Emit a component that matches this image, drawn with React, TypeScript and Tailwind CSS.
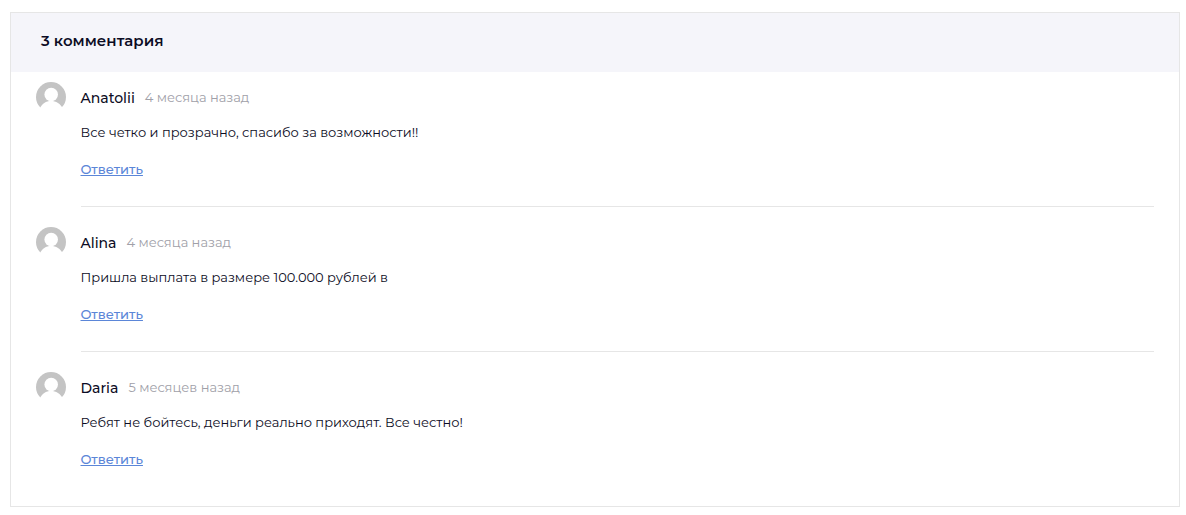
const comments = [
  { name: "Anatolii", time: "4 месяца назад", text: "Все четко и прозрачно, спасибо за возможности!!" },
  { name: "Alina", time: "4 месяца назад", text: "Пришла выплата в размере 100.000 рублей в" },
  { name: "Daria", time: "5 месяцев назад", text: "Ребят не бойтесь, деньги реально приходят. Все честно!" },
];

function Avatar() {
  return (
    <svg width="30" height="30" viewBox="0 0 30 30" className="block shrink-0">
      <circle cx="15" cy="15" r="15" fill="#c4c4c4" />
      <circle cx="15.2" cy="12.5" r="6.8" fill="#fff" />
      <path d="M3.5 27 C6 21.5 10 19 15 19 C20 19 24.5 21.5 27 27 L27 31 L3.5 31 Z" fill="#fff" />
    </svg>
  );
}

export default function App() {
  return (
    <div className="w-[1186px] h-[515px] bg-white pt-3 pl-2.5 font-['Montserrat','Inter',sans-serif]">
      <div className="w-[1170px] border border-[#e6e6e6] h-[495px]">
        <div className="h-[59px] bg-[#f5f5fa] flex items-center pl-[30px] pb-[3px] text-[15px] font-semibold text-[#0c0c24]">3 комментария</div>
        <div className="pl-[25px] pr-[25px] pt-2.5">
          {comments.map((c, i) => (
            <div key={c.name} className="flex gap-[14.5px] mb-5">
              <Avatar />
              <div className={`flex-1 h-[125px] ${i < 2 ? "border-b border-[#e6e6e6]" : ""}`}>
                <div className="flex items-center gap-2.5 h-[30px] pt-px">
                  <span className="text-sm font-medium text-[#0c0c24]">{c.name}</span>
                  <span className="text-[13px] text-[#a0a0a8]">{c.time}</span>
                </div>
                <p className="mt-2.5 text-[13px] leading-[20px] text-[#0c0c24]">{c.text}</p>
                <a href="#" className="block mt-[17px] text-[13px] leading-[20px] font-medium text-[#5b86d8] underline">Ответить</a>
              </div>
            </div>
          ))}
        </div>
      </div>
    </div>
  );
}
